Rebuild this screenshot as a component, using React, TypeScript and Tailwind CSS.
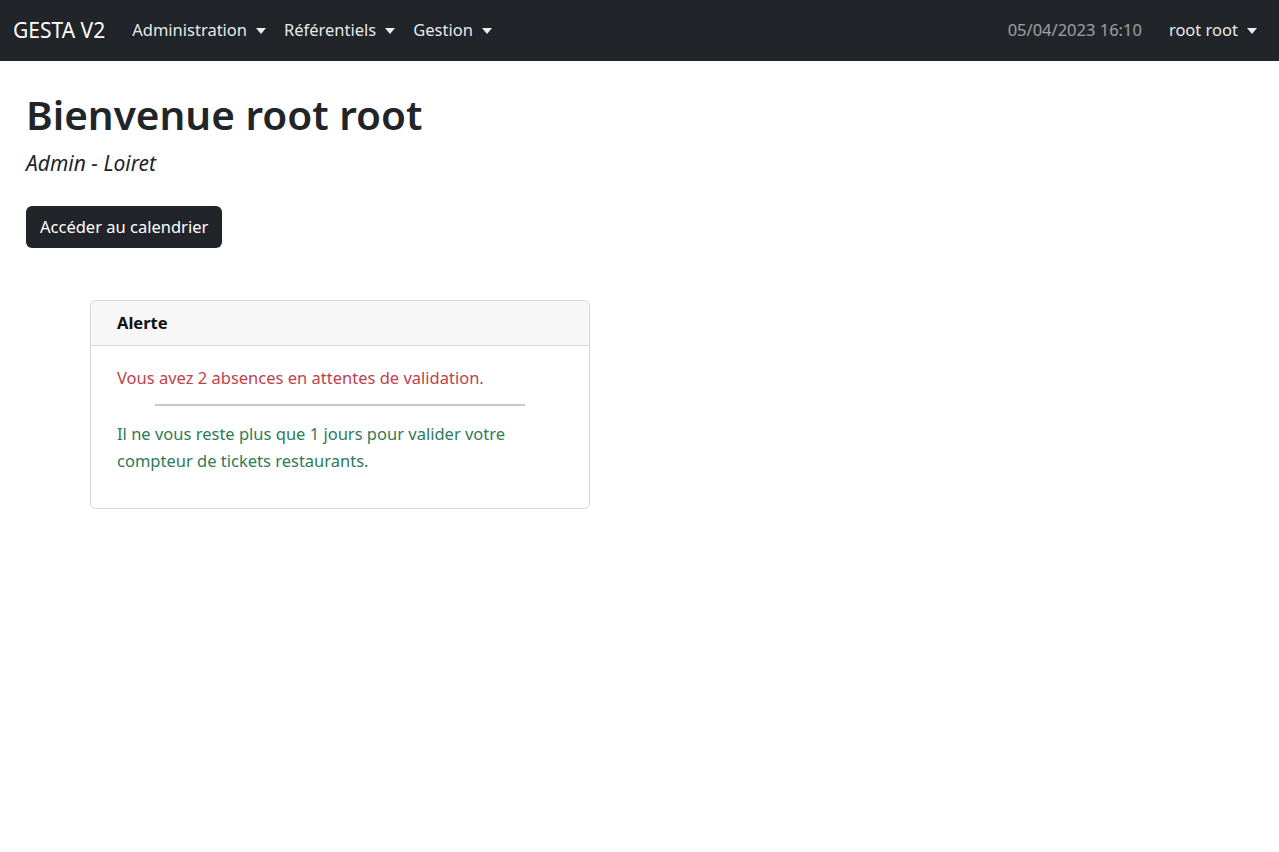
const Caret = () => (
  <span className="ml-[9px] inline-block h-0 w-0 border-x-[5px] border-t-[6px] border-x-transparent border-t-current align-[3px]" />
);

const NavItem = ({ label }: { label: string }) => (
  <a href="#" className="flex items-center px-[9px] text-white/[0.92]">
    {label}
    <Caret />
  </a>
);

export default function App() {
  return (
    <div className="min-h-[852px] bg-white font-['Segoe_UI','Noto_Sans',sans-serif] text-[16.5px] leading-[26.4px] text-[#212529]">
      <nav className="flex h-[61px] items-center bg-[#212529] pl-[13px] pr-[13px]">
        <a href="#" className="mr-[18px] text-[21px] text-white">
          GESTA V2
        </a>
        <div className="flex">
          <NavItem label="Administration" />
          <NavItem label="Référentiels" />
          <NavItem label="Gestion" />
        </div>
        <div className="ml-auto flex items-center">
          <span className="mr-[18px] text-white/55">05/04/2023 16:10</span>
          <NavItem label="root root" />
        </div>
      </nav>

      <main className="px-[26px] pt-[28px]">
        <h1 className="text-[40.5px] font-semibold leading-[52.8px]">Bienvenue root root</h1>
        <h5 className="mt-[8px] text-[21px] italic leading-[26.4px]">Admin - Loiret</h5>

        <button className="mt-[30px] rounded-[6px] bg-[#212529] px-[14px] py-[7.5px] text-white">
          Accéder au calendrier
        </button>

        <div className="ml-[64px] mt-[52px] w-[500px] rounded-[6px] border border-[#d6d6d6]">
          <div className="rounded-t-[6px] border-b border-[#d6d6d6] bg-[#f7f7f7] px-[26px] py-[9px] font-bold text-[#111]">
            Alerte
          </div>
          <div className="px-[26px] pb-[34px] pt-[19px]">
            <p className="text-[#c0414c]">Vous avez 2 absences en attentes de validation.</p>
            <hr className="mx-auto mb-[15px] mt-[13px] w-[370px] border-t-2 border-[#c8c8c8]" />
            <p className="text-[#2d7b58]">
              Il ne vous reste plus que 1 jours pour valider votre compteur de tickets restaurants.
            </p>
          </div>
        </div>
      </main>
    </div>
  );
}
